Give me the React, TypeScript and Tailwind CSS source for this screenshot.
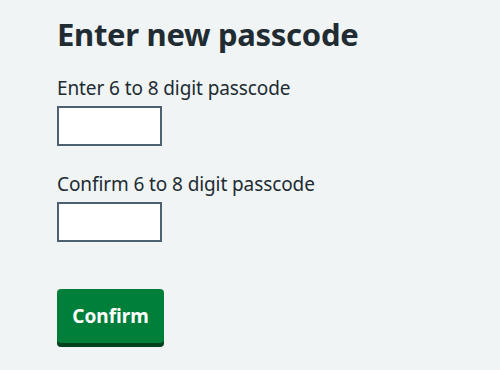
export default function App() {
  return (
    <div className="min-h-[370px] w-[500px] bg-[#f0f4f5] pl-[57px] pt-[14px] text-[#212b32]" style={{ fontFamily: '"Noto Sans", Arial, sans-serif' }}>
      <h1 className="m-0 text-[31px] font-bold leading-[40px] tracking-[-0.3px]">Enter new passcode</h1>
      <div className="mt-[20px] flex flex-col">
        <label className="text-[19px] leading-[28px] tracking-[-0.1px]">Enter 6 to 8 digit passcode</label>
        <input className="mt-[4px] h-[40px] w-[105px] border-2 border-[#4c6272] bg-white outline-none" type="password" />
      </div>
      <div className="mt-[24px] flex flex-col">
        <label className="text-[19px] leading-[28px] tracking-[-0.1px]">Confirm 6 to 8 digit passcode</label>
        <input className="mt-[4px] h-[40px] w-[105px] border-2 border-[#4c6272] bg-white outline-none" type="password" />
      </div>
      <button className="mt-[47px] h-[54px] w-[107px] rounded-[4px] bg-[#007f3b] text-[19px] font-bold text-white shadow-[0_4px_0_#00401e]">
        Confirm
      </button>
    </div>
  );
}
